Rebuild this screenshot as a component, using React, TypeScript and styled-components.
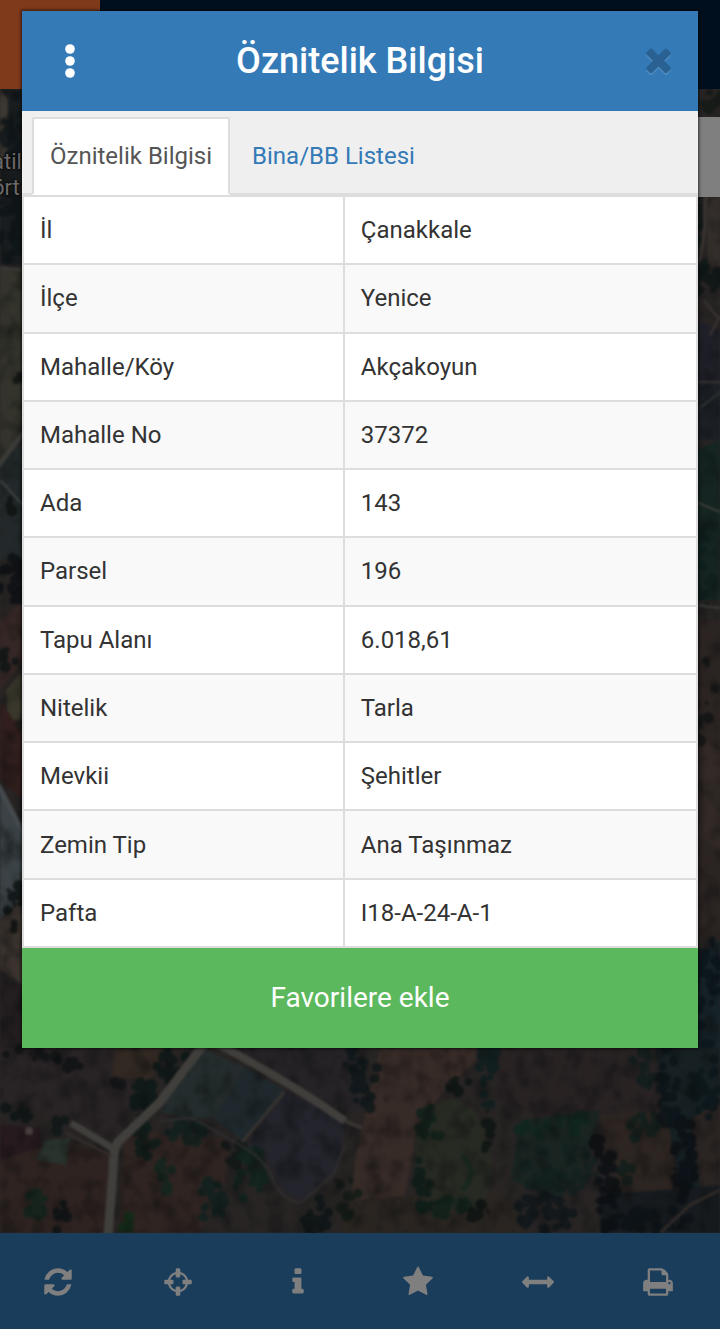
import React from "react";
import styled, { createGlobalStyle } from "styled-components";

const GlobalStyle = createGlobalStyle`
  *, *::before, *::after { box-sizing: border-box; }
  body {
    margin: 0;
    font-family: Roboto, "Noto Sans", sans-serif;
    font-size: 24px;
    line-height: 34px;
    color: #333;
    background: #001e3a;
  }
  button { font: inherit; border: 0; padding: 0; background: none; cursor: pointer; }
`;

/* ---------- page behind the dialog ---------- */

const Page = styled.div`
  position: relative;
  display: flex;
  flex-direction: column;
  min-height: 100vh;
`;

const TopBar = styled.header`
  display: flex;
  flex: none;
  height: 89px;
  background: #001e3a;
`;

const TopBarMark = styled.div`
  width: 100px;
  background: #ff7236;
`;

const MapArea = styled.main`
  position: relative;
  flex: 1;
  overflow: hidden;
  background: #565050;
`;

const MapDrawing = styled.svg`
  position: absolute;
  inset: 0;
  width: 100%;
  height: 100%;
`;

const MapLabel = styled.div`
  position: absolute;
  left: -8px;
  top: 60px;
  font-size: 22px;
  line-height: 26px;
  color: #d8d4d0;
  text-shadow: 0 0 2px #000, 0 0 3px #000;
`;

const MapControl = styled.div`
  position: absolute;
  right: 0;
  top: 28px;
  width: 80px;
  height: 80px;
  background: #fff;
`;

const Toolbar = styled.nav`
  display: grid;
  grid-template-columns: repeat(6, 1fr);
  flex: none;
  height: 96px;
  background: #337ab7;
`;

const ToolButton = styled.button`
  display: flex;
  align-items: center;
  justify-content: center;
  padding: 2px 4px 0 0;
  color: #fff;
`;

const Glyph = styled.svg<{ $size: number }>`
  display: block;
  width: ${(p) => p.$size}px;
  height: ${(p) => p.$size}px;
  fill: currentColor;
`;

/* ---------- dialog ---------- */

const Backdrop = styled.div`
  position: absolute;
  inset: 0;
  padding: 11px 22px;
  background: rgba(0, 0, 0, 0.5);
`;

const Dialog = styled.section`
  background: #fff;
  box-shadow: 0 0 3px 1px rgba(0, 0, 0, 0.6);
`;

const DialogHeader = styled.div`
  display: grid;
  grid-template-columns: 96px 1fr 96px;
  align-items: center;
  height: 100px;
  background: #337ab7;
`;

const DialogTitle = styled.h1`
  margin: 0;
  text-align: center;
  font-size: 36px;
  line-height: 40px;
  font-weight: 500;
  color: #fff;
`;

const HeaderButton = styled.button<{ $faded?: boolean }>`
  display: flex;
  align-items: center;
  justify-content: center;
  height: 100px;
  padding: ${(p) => (p.$faded ? "0 0 4px 16px" : "0")};
  color: ${(p) => (p.$faded ? "#296292" : "#fff")};
  filter: ${(p) => (p.$faded ? "drop-shadow(0 2px 0 #4c89be)" : "none")};
`;

const MenuDots = styled.svg`
  display: block;
  width: 10px;
  height: 34px;
  fill: currentColor;
`;

const TabList = styled.div`
  display: flex;
  align-items: flex-end;
  gap: 4px;
  padding: 6px 10px 0;
  background: #efefef;
  border-bottom: 2px solid #ddd;
`;

const Tab = styled.button<{ $active?: boolean }>`
  height: 78px;
  margin-bottom: -2px;
  padding: 0 16px;
  border: 2px solid ${(p) => (p.$active ? "#ddd" : "transparent")};
  border-bottom-color: ${(p) => (p.$active ? "#fff" : "transparent")};
  border-radius: 2px 2px 0 0;
  background: ${(p) => (p.$active ? "#fff" : "transparent")};
  color: ${(p) => (p.$active ? "#555" : "#337ab7")};
`;

const Table = styled.table`
  width: 100%;
  height: 753px;
  table-layout: fixed;
  border-collapse: collapse;
`;

const Row = styled.tr`
  background: #fff;
  &:nth-child(even) { background: #f9f9f9; }
`;

const NameCell = styled.th`
  width: 47.6%;
  padding: 16px;
  border: 2px solid #ddd;
  text-align: left;
  font-weight: 400;
`;

const ValueCell = styled.td`
  padding: 16px;
  border: 2px solid #ddd;
`;

const FavouriteButton = styled.button`
  display: block;
  width: 100%;
  height: 100px;
  background: #5cb85c;
  color: #fff;
  font-size: 28px;
`;

/* ---------- data ---------- */

const attributes: [string, string][] = [
  ["İl", "Çanakkale"],
  ["İlçe", "Yenice"],
  ["Mahalle/Köy", "Akçakoyun"],
  ["Mahalle No", "37372"],
  ["Ada", "143"],
  ["Parsel", "196"],
  ["Tapu Alanı", "6.018,61"],
  ["Nitelik", "Tarla"],
  ["Mevkii", "Şehitler"],
  ["Zemin Tip", "Ana Taşınmaz"],
  ["Pafta", "I18-A-24-A-1"],
];

const tools = [
  {
    name: "Yenile",
    path: "M1639 1056q0 5-1 7-64 268-268 434.500t-478 166.500q-146 0-282.500-55t-243.500-157l-129 129q-19 19-45 19t-45-19-19-45v-448q0-26 19-45t45-19h448q26 0 45 19t19 45-19 45l-137 137q71 66 161 102t187 36q134 0 250-65t186-179q11-17 53-117 8-23 30-23h192q13 0 22.500 9.500t9.500 22.500zm25-800v448q0 26-19 45t-45 19h-448q-26 0-45-19t-19-45 19-45l138-138q-148-137-349-137-134 0-250 65t-186 179q-11 17-53 117-8 23-30 23h-199q-13 0-22.500-9.500t-9.500-22.500v-7q65-268 270-434.500t480-166.500q146 0 284 55.500t245 156.500l130-129q19-19 45-19t45 19 19 45z",
  },
  {
    name: "Konum",
    path: "M1325 1024h-109q-26 0-45-19t-19-45v-128q0-26 19-45t45-19h109q-32-108-112.500-188.500t-188.500-112.500v109q0 26-19 45t-45 19h-128q-26 0-45-19t-19-45v-109q-108 32-188.500 112.500t-112.500 188.500h109q26 0 45 19t19 45v128q0 26-19 45t-45 19h-109q32 108 112.500 188.500t188.500 112.500v-109q0-26 19-45t45-19h128q26 0 45 19t19 45v109q108-32 188.500-112.500t112.500-188.500zm339-192v128q0 26-19 45t-45 19h-143q-37 161-154.500 278.500t-278.500 154.500v143q0 26-19 45t-45 19h-128q-26 0-45-19t-19-45v-143q-161-37-278.500-154.500t-154.500-278.500h-143q-26 0-45-19t-19-45v-128q0-26 19-45t45-19h143q37-161 154.500-278.500t278.500-154.500v-143q0-26 19-45t45-19h128q26 0 45 19t19 45v143q161 37 278.500 154.500t154.500 278.500h143q26 0 45 19t19 45z",
  },
  {
    name: "Bilgi",
    path: "M1216 1344v128q0 26-19 45t-45 19h-512q-26 0-45-19t-19-45v-128q0-26 19-45t45-19h64v-384h-64q-26 0-45-19t-19-45v-128q0-26 19-45t45-19h384q26 0 45 19t19 45v576h64q26 0 45 19t19 45zm-128-1152v192q0 26-19 45t-45 19h-256q-26 0-45-19t-19-45v-192q0-26 19-45t45-19h256q26 0 45 19t19 45z",
  },
  {
    name: "Favoriler",
    path: "M1728 647q0 22-26 48l-363 354 86 500q1 7 1 20 0 21-10.500 35.500t-30.500 14.500q-19 0-40-12l-449-236-449 236q-22 12-40 12-21 0-31.500-14.500t-10.500-35.500q0-6 2-20l86-500-364-354q-25-27-25-48 0-37 56-46l502-73 225-455q19-41 49-41t49 41l225 455 502 73q56 9 56 46z",
  },
  {
    name: "Ölçüm",
    path: "M1792 896q0 26-19 45l-256 256q-19 19-45 19t-45-19-19-45v-128h-1024v128q0 26-19 45t-45 19-45-19l-256-256q-19-19-19-45t19-45l256-256q19-19 45-19t45 19 19 45v128h1024v-128q0-26 19-45t45-19 45 19l256 256q19 19 19 45z",
  },
  {
    name: "Yazdır",
    path: "M448 1536h896v-256h-896v256zm0-640h896v-384h-160q-40 0-68-28t-28-68v-160h-640v640zm1152 64q0-26-19-45t-45-19-45 19-19 45 19 45 45 19 45-19 19-45zm128 0v416q0 13-9.500 22.500t-22.500 9.500h-224v160q0 40-28 68t-68 28h-960q-40 0-68-28t-28-68v-160h-224q-13 0-22.500-9.500t-9.500-22.500v-416q0-79 56.500-135.500t135.500-56.500h64v-544q0-40 28-68t68-28h672q40 0 88 20t76 48l152 152q28 28 48 76t20 88v256h64q79 0 135.500 56.500t56.500 135.500z",
  },
];

const closePath =
  "M1490 1322q0 40-28 68l-136 136q-28 28-68 28t-68-28l-294-294-294 294q-28 28-68 28t-68-28l-136-136q-28-28-28-68t28-68l294-294-294-294q-28-28-28-68t28-68l136-136q28-28 68-28t68 28l294 294 294-294q28-28 68-28t68 28l136 136q28 28 28 68t-28 68l-294 294 294 294q28 28 28 68z";

/* ---------- aerial map ---------- */

/* Fields: fill colour and outline. */
const fields: [string, string][] = [
  ["#343a3e", "0,89 22,89 22,265 0,265"],
  ["#7a7064", "0,89 8,100 7,155 0,160"],
  ["#686858", "0,270 24,270 24,422 0,466"],
  ["#465254", "0,466 24,440 24,560 0,560"],
  ["#6a4e4a", "0,620 24,600 24,660 0,690"],
  ["#747058", "6,690 24,670 24,720 8,720"],
  ["#643f3b", "0,700 24,735 24,800 0,780"],
  ["#74848a", "0,785 24,830 24,895 0,920"],
  ["#76665c", "0,920 24,900 24,985 0,970"],
  ["#463c40", "0,980 24,985 24,1050 0,1050"],
  ["#685c56", "706,195 720,195 720,270 708,265"],
  ["#3e3e50", "696,320 720,330 720,382 696,382"],
  ["#3a414e", "696,384 720,384 720,440 696,440"],
  ["#2a4a44", "696,450 720,440 720,600 696,600"],
  ["#564844", "696,620 720,620 720,940 696,940"],
  ["#66544c", "704,740 720,750 720,850 704,840"],
  ["#2a4450", "696,960 720,940 720,1050 696,1050"],
  ["#504648", "0,1048 150,1048 130,1100 118,1140 70,1120 0,1100"],
  ["#665246", "115,1048 168,1048 150,1080 112,1077"],
  ["#4c343c", "0,1125 40,1128 42,1155 0,1160"],
  ["#5e4742", "0,1160 64,1140 108,1155 104,1233 0,1233"],
  ["#526458", "45,1140 70,1138 66,1165 36,1160"],
  ["#48595a", "200,1048 244,1067 212,1118 190,1118 160,1112"],
  ["#3e525a", "244,1067 284,1090 242,1140 213,1118"],
  ["#474858", "287,1092 347,1121 336,1170 300,1200 284,1192 268,1160 247,1142"],
  ["#4c464c", "235,1048 360,1048 360,1110 345,1112"],
  ["#5e4842", "125,1130 230,1140 225,1180 200,1233 118,1233"],
  ["#6e564e", "380,1048 490,1048 440,1095 416,1135 405,1195 350,1233 355,1160"],
  ["#544a42", "350,1200 500,1190 530,1233 340,1233"],
  ["#504446", "500,1048 650,1048 660,1110 560,1120 495,1100"],
  ["#344a44", "520,1120 600,1110 592,1150 560,1200 510,1180"],
  ["#5a4a44", "600,1115 662,1110 690,1170 690,1200 610,1190"],
  ["#2e4248", "655,1048 720,1048 720,1100 690,1120 700,1190 680,1190"],
  ["#544844", "690,1120 720,1100 720,1180 705,1190"],
  ["#2e363e", "600,1195 720,1185 720,1233 600,1233"],
];

/* Roads and paths: line width, colour and course. */
const roads: [number, string, string][] = [
  [9, "#827e78", "M204 1044 L160 1102 L118 1142 Q113 1150 113 1170 L108 1236"],
  [8, "#827e78", "M214 1042 Q290 1082 345 1121"],
  [4, "#716b66", "M345 1121 L362 1128"],
  [7, "#827e78", "M71 1123 L114 1149"],
  [2, "#6b5f57", "M66 1133 L112 1156"],
  [3, "#6b6664", "M284 1092 L242 1142"],
  [2, "#5c5c5e", "M160 1121 L192 1118 L240 1145 Q268 1160 275 1185 Q290 1205 302 1202 L333 1175 L345 1145"],
  [2, "#4b5252", "M244 1067 L213 1118"],
  [3, "#75716c", "M0 268 L24 270"],
  [5, "#75756f", "M-2 466 L24 432"],
  [2, "#7b8080", "M0 480 L24 506"],
  [5, "#89939a", "M-2 785 L26 838"],
  [3, "#746a62", "M706 195 Q704 210 705 225 Q702 250 699 262"],
  [2, "#746a62", "M704 300 L718 318 M710 335 L720 316"],
  [2, "#66666c", "M696 382 L720 382"],
  [2, "#5a6a60", "M700 408 L720 392"],
  [2, "#757a70", "M696 502 L720 512 M696 605 L720 608"],
  [3, "#5e544f", "M660 1233 L690 1205 L720 1190"],
];

/* Tree stands: centre, spread, count and fill colour. */
const stands: [number, number, number, number, number, string][] = [
  [14, 130, 12, 34, 30, "#1c2a32"],
  [12, 225, 14, 38, 40, "#1c2a30"],
  [18, 376, 6, 5, 4, "#1c2522"],
  [14, 505, 8, 8, 4, "#1c2522"],
  [12, 580, 14, 26, 34, "#181e28"],
  [8, 660, 8, 16, 8, "#1c2a2a"],
  [16, 905, 10, 26, 12, "#15201f"],
  [710, 100, 12, 10, 10, "#26322c"],
  [700, 240, 6, 55, 22, "#1b302f"],
  [708, 285, 14, 18, 18, "#1a2a2a"],
  [706, 560, 12, 45, 16, "#1b3c38"],
  [704, 700, 12, 50, 10, "#22282a"],
  [708, 990, 14, 55, 30, "#142832"],
  [30, 1055, 30, 6, 10, "#20252a"],
  [68, 1063, 14, 7, 8, "#1b2226"],
  [18, 1112, 20, 8, 10, "#172a2a"],
  [60, 1124, 8, 8, 6, "#1c2c2c"],
  [120, 1083, 6, 6, 5, "#20262a"],
  [172, 1066, 16, 18, 30, "#162e2c"],
  [143, 1098, 12, 20, 30, "#14322e"],
  [147, 1135, 12, 22, 26, "#173830"],
  [165, 1170, 8, 22, 14, "#224c3c"],
  [192, 1133, 26, 10, 26, "#1f423c"],
  [232, 1155, 14, 14, 14, "#22302f"],
  [250, 1175, 16, 28, 34, "#1e4a3c"],
  [212, 1205, 12, 28, 28, "#1e423e"],
  [36, 1208, 9, 20, 18, "#1f4838"],
  [60, 1218, 10, 16, 8, "#17242a"],
  [126, 1224, 7, 8, 6, "#1c5a2c"],
  [315, 1215, 14, 20, 26, "#182a2c"],
  [345, 1198, 14, 22, 12, "#203428"],
  [354, 1056, 12, 16, 14, "#1a2e34"],
  [366, 1080, 14, 30, 24, "#1a2c32"],
  [488, 1070, 10, 38, 34, "#1a3c3c"],
  [460, 1085, 10, 12, 8, "#162824"],
  [430, 1125, 14, 18, 22, "#1e4234"],
  [423, 1185, 7, 32, 22, "#18382e"],
  [450, 1208, 32, 8, 26, "#1e4234"],
  [488, 1135, 4, 26, 12, "#182a26"],
  [478, 1212, 10, 10, 10, "#172420"],
  [535, 1128, 20, 8, 12, "#1e4c3e"],
  [575, 1122, 18, 10, 12, "#1e4c3e"],
  [560, 1170, 38, 26, 44, "#22423f"],
  [545, 1212, 30, 20, 50, "#1c2c34"],
  [640, 1070, 12, 24, 18, "#203c3a"],
  [645, 1128, 16, 16, 18, "#1f4038"],
  [598, 1143, 5, 12, 12, "#15191e"],
  [608, 1190, 10, 42, 40, "#151e28"],
  [668, 1090, 10, 42, 38, "#162832"],
  [685, 1160, 12, 44, 50, "#141e2a"],
  [705, 1080, 16, 38, 32, "#182f38"],
  [650, 1220, 40, 12, 40, "#18242e"],
  [625, 1172, 12, 10, 8, "#1f3c34"],
];

function scatter(cx: number, cy: number, rx: number, ry: number, count: number) {
  return Array.from({ length: count }, (_, i) => {
    const angle = i * i * 1.7 + cx;
    const reach = Math.sqrt((i + 0.5) / count);
    return {
      x: cx + Math.cos(angle) * reach * rx,
      y: cy + Math.sin(angle) * reach * ry,
      r: 2 + ((i * 7 + cy) % 5) * 0.9,
    };
  });
}

function AerialMap() {
  return (
    <MapDrawing viewBox="0 89 720 1144" preserveAspectRatio="xMidYMid slice" aria-hidden="true">
      <defs>
        <filter id="soften" x="0" y="0" width="1" height="1" colorInterpolationFilters="sRGB">
          <feGaussianBlur stdDeviation="1.2" />
        </filter>
        <filter id="grain" x="0" y="0" width="1" height="1" colorInterpolationFilters="sRGB">
          <feTurbulence type="fractalNoise" baseFrequency="0.06 0.05" numOctaves="4" seed="8" />
          <feColorMatrix values="0 0 0 0 0.08  0 0 0 0 0.1  0 0 0 0 0.1  1.1 0 0 0 -0.46" />
        </filter>
      </defs>
      <g filter="url(#soften)">
        <rect x="0" y="89" width="720" height="1144" fill="#504848" />
        {fields.map(([fill, points]) => (
          <polygon key={points} fill={fill} points={points} />
        ))}
        <path d="M452 1098 Q480 1105 489 1145 Q500 1200 470 1210 L430 1208 Q412 1180 416 1135 Q425 1105 452 1098Z" fill="#4f5446" />
        <path d="M462 1155 Q480 1175 462 1190" fill="none" stroke="#30503c" strokeWidth="5" />
        {stands.map(([cx, cy, rx, ry, count, fill]) => (
          <g key={`${cx}-${cy}`} fill={fill} opacity="0.8">
            {scatter(cx, cy, rx, ry, count).map((t, i) => (
              <circle key={i} cx={t.x} cy={t.y} r={t.r} />
            ))}
          </g>
        ))}
        <rect x="0" y="89" width="720" height="1144" filter="url(#grain)" />
        {roads.map(([width, stroke, d]) => (
          <path key={d} d={d} fill="none" stroke={stroke} strokeWidth={width} />
        ))}
        <circle cx="29" cy="1131" r="4" fill="#8a7a7a" />
      </g>
    </MapDrawing>
  );
}

function Icon({ path, size }: { path: string; size: number }) {
  return (
    <Glyph $size={size} viewBox="0 0 1792 1792" aria-hidden="true">
      <path d={path} />
    </Glyph>
  );
}

export default function App() {
  return (
    <>
      <GlobalStyle />
      <Page>
        <TopBar>
          <TopBarMark />
        </TopBar>
        <MapArea>
          <AerialMap />
          <MapLabel>
            atil
            <br />
            ört
          </MapLabel>
          <MapControl />
        </MapArea>
        <Toolbar>
          {tools.map((tool) => (
            <ToolButton key={tool.name} type="button" aria-label={tool.name}>
              <Icon path={tool.path} size={32} />
            </ToolButton>
          ))}
        </Toolbar>
        <Backdrop>
          <Dialog role="dialog" aria-modal="true" aria-labelledby="dialog-title">
            <DialogHeader>
              <HeaderButton type="button" aria-label="Menü">
                <MenuDots viewBox="0 0 10 34" aria-hidden="true">
                  <circle cx="5" cy="5" r="4.8" />
                  <circle cx="5" cy="17" r="4.8" />
                  <circle cx="5" cy="29" r="4.8" />
                </MenuDots>
              </HeaderButton>
              <DialogTitle id="dialog-title">Öznitelik Bilgisi</DialogTitle>
              <HeaderButton type="button" aria-label="Kapat" $faded>
                <Icon path={closePath} size={37} />
              </HeaderButton>
            </DialogHeader>
            <TabList role="tablist">
              <Tab type="button" role="tab" aria-selected="true" $active>
                Öznitelik Bilgisi
              </Tab>
              <Tab type="button" role="tab" aria-selected="false">
                Bina/BB Listesi
              </Tab>
            </TabList>
            <Table>
              <tbody>
                {attributes.map(([name, value]) => (
                  <Row key={name}>
                    <NameCell scope="row">{name}</NameCell>
                    <ValueCell>{value}</ValueCell>
                  </Row>
                ))}
              </tbody>
            </Table>
            <FavouriteButton type="button">Favorilere ekle</FavouriteButton>
          </Dialog>
        </Backdrop>
      </Page>
    </>
  );
}
